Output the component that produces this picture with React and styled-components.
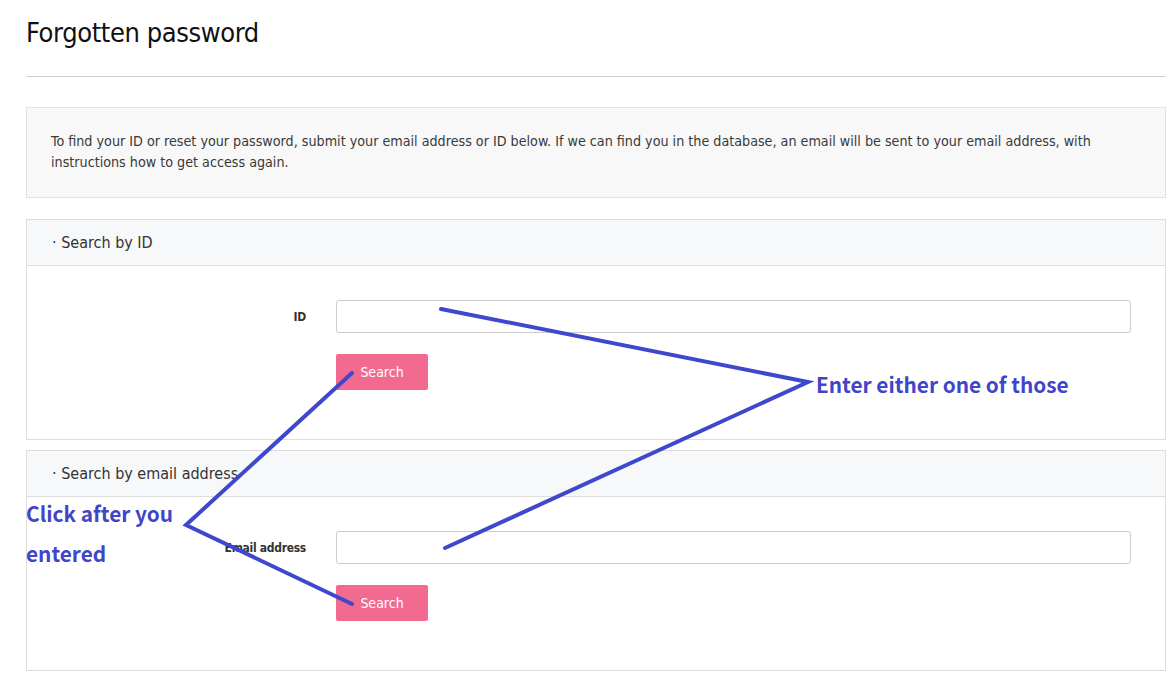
import React from 'react';
import styled, { createGlobalStyle } from 'styled-components';

const GlobalStyle = createGlobalStyle`
  body {
    margin: 0;
    background: #ffffff;
    font-family: 'DejaVu Sans Condensed', 'Liberation Sans', Arial, sans-serif;
    color: #333333;
  }
`;

const Page = styled.div`
  position: relative;
  padding: 0 7px 20px 26px;
`;

const Title = styled.h2`
  margin: 0;
  padding-top: 14px;
  font-size: 27px;
  font-weight: 400;
  letter-spacing: -0.4px;
  line-height: 38px;
  color: #111111;
`;

const Rule = styled.hr`
  margin: 24px 0 0;
  border: 0;
  border-top: 1px solid #cfcfcf;
`;

const InfoBox = styled.div`
  margin-top: 30px;
  padding: 23px 24px 24px;
  background: #f8f8f8;
  border: 1px solid #e2e2e2;
  font-size: 14.2px;
  line-height: 21px;
  color: #3a3a3a;
`;

const Section = styled.section`
  margin-top: ${p => p.$top}px;
  border: 1px solid #dedede;
`;

const SectionHead = styled.div`
  height: 45px;
  display: flex;
  align-items: center;
  padding-left: 25px;
  background: #f7f8fa;
  border-bottom: 1px solid #dedede;
  font-size: 16px;
  color: #333333;
`;

const SectionBody = styled.div`
  display: grid;
  grid-template-columns: 279px 1fr;
  column-gap: 30px;
  row-gap: 21px;
  padding: 34px 34px 49px 0;
`;

const Label = styled.label`
  display: flex;
  align-items: center;
  justify-content: flex-end;
  font-size: 12px;
  font-weight: 700;
  letter-spacing: -0.3px;
  color: #333333;
`;

const Input = styled.input`
  height: 33px;
  box-sizing: border-box;
  border: 1px solid #cccccc;
  border-radius: 3px;
  background: #ffffff;
  padding: 0 10px;
`;

const Button = styled.button`
  grid-column: 2;
  justify-self: start;
  width: 92px;
  height: 36px;
  border: 0;
  border-radius: 2px;
  background: #f36a91;
  color: #ffffff;
  font-family: inherit;
  font-size: 14px;
`;

const Overlay = styled.svg`
  position: absolute;
  left: 0;
  top: 0;
  pointer-events: none;
`;

const Note = styled.div`
  position: absolute;
  left: ${p => p.$x}px;
  top: ${p => p.$y}px;
  font-family: 'Noto Sans CJK KR', 'Noto Sans', sans-serif;
  font-weight: 700;
  font-size: 20.8px;
  line-height: 40px;
  color: #4145c8;
  white-space: nowrap;
`;

const FormSection = ({ top, heading, label }) => (
  <Section $top={top}>
    <SectionHead>· {heading}</SectionHead>
    <SectionBody>
      <Label>{label}</Label>
      <Input type="text" />
      <Button>Search</Button>
    </SectionBody>
  </Section>
);

export default function App() {
  return (
    <>
      <GlobalStyle />
      <Page>
        <Title>Forgotten password</Title>
        <Rule />
        <InfoBox>
          To find your ID or reset your password, submit your email address or ID below. If we can find you in the database, an email will be sent to your email address, with instructions how to get access again.
        </InfoBox>
        <FormSection top={21} heading="Search by ID" label="ID" />
        <FormSection top={10} heading="Search by email address" label="Email address" />

        <Overlay width="1173" height="689" viewBox="0 0 1173 689">
          <g fill="none" stroke="#3f48cc" strokeWidth="4" strokeLinecap="round" strokeLinejoin="miter">
            <polyline points="441,309 808,382 445,548" />
            <polyline points="352,373 186,525 352,604" />
          </g>
        </Overlay>
        <Note $x={816} $y={364}>Enter either one of those</Note>
        <Note $x={26} $y={493}>Click after you<br />entered</Note>
      </Page>
    </>
  );
}
